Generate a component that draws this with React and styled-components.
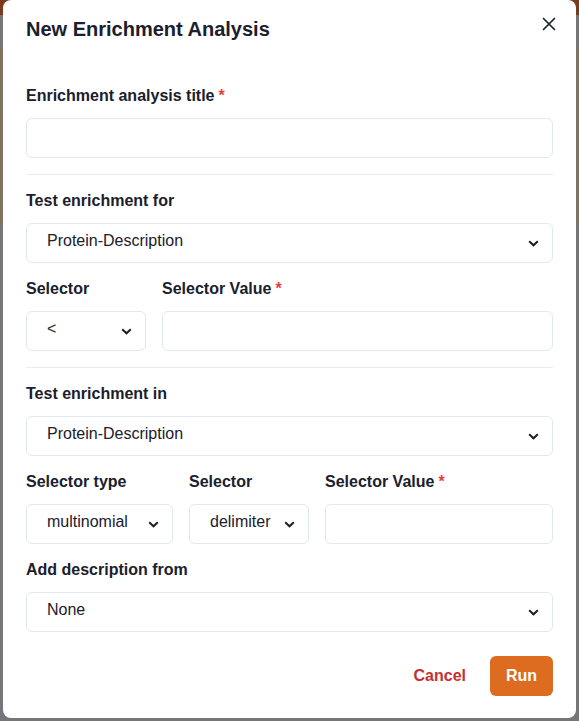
import React from 'react';
import styled, { createGlobalStyle } from 'styled-components';

const GlobalStyle = createGlobalStyle`
  html, body {
    margin: 0;
    padding: 0;
  }
  body {
    font-family: "Liberation Sans", Arial, sans-serif;
    color: #1a202c;
  }
  * {
    box-sizing: border-box;
  }
`;

const Backdrop = styled.div`
  width: 579px;
  height: 721px;
  overflow: hidden;
  display: flex;
  justify-content: flex-start;
  align-items: flex-start;
  padding-left: 3px;
  background: linear-gradient(
    to bottom,
    #7b3a1a 0px,
    #7b3a1a 15px,
    #76767a 15px,
    #76767a 48px,
    #7d7462 48px,
    #7d7462 225px,
    #76767a 225px
  );
`;

const Modal = styled.div`
  width: 573px;
  height: 718px;
  background: #fff;
  border-radius: 8px;
  display: flex;
  flex-direction: column;
  position: relative;
`;

const Header = styled.div`
  padding: 16px 23px 0;
  display: flex;
  align-items: center;
  height: 43px;
`;

const Title = styled.h2`
  margin: 0;
  font-size: 20px;
  font-weight: 700;
  line-height: 27px;
`;

const CloseButton = styled.button`
  position: absolute;
  top: 8px;
  right: 11px;
  width: 32px;
  height: 32px;
  border: none;
  background: transparent;
  display: flex;
  align-items: center;
  justify-content: center;
  padding: 0;
  cursor: pointer;
`;

const Body = styled.div`
  padding: 41px 23px 0;
  display: flex;
  flex-direction: column;
`;

const Field = styled.div`
  display: flex;
  flex-direction: column;
  width: ${(p) => p.width || 'auto'};
  flex: ${(p) => (p.width ? 'none' : '1')};
`;

const Label = styled.label`
  display: block;
  font-size: 16px;
  font-weight: 700;
  line-height: 24px;
  height: 24px;
  margin-bottom: 10px;
`;

const Required = styled.span`
  color: #e53e3e;
  margin-left: 4px;
`;

const Input = styled.input`
  display: block;
  width: 100%;
  height: 40px;
  margin: 0;
  border: 1px solid #e2e8f0;
  border-radius: 6px;
  padding: 0 16px;
  font-family: inherit;
  font-size: 16px;
  outline: none;
`;

const SelectWrap = styled.div`
  position: relative;
  width: 100%;
  height: 40px;
`;

const Select = styled.select`
  display: block;
  width: 100%;
  height: 40px;
  margin: 0;
  appearance: none;
  -webkit-appearance: none;
  border: 1px solid #e2e8f0;
  border-radius: 6px;
  background: #fff;
  padding: 0 32px 5px 20px;
  font-family: inherit;
  font-size: 16px;
  color: #1a202c;
  outline: none;
`;

const Chevron = styled.svg`
  position: absolute;
  right: 14px;
  top: 50%;
  margin-top: -3px;
  pointer-events: none;
`;

const Row = styled.div`
  display: flex;
  gap: 16px;
`;

const Divider = styled.div`
  height: 1px;
  background: #e9edf2;
  margin: 16px 0 14px;
`;

const Spacer = styled.div`
  height: 14px;
`;

const Footer = styled.div`
  display: flex;
  justify-content: flex-end;
  align-items: center;
  gap: 12px;
  padding: 24px 23px 0;
`;

const TextButton = styled.button`
  border: none;
  background: transparent;
  color: #c53030;
  font-family: inherit;
  font-size: 16px;
  font-weight: 700;
  height: 40px;
  padding: 0 12px;
  cursor: pointer;
`;

const PrimaryButton = styled.button`
  border: none;
  background: #dd6b20;
  color: #fff;
  font-family: inherit;
  font-size: 16px;
  font-weight: 700;
  height: 40px;
  width: 63px;
  border-radius: 6px;
  cursor: pointer;
`;

const SelectBox = ({ value }) => (
  <SelectWrap>
    <Select defaultValue={value}>
      <option value={value}>{value}</option>
    </Select>
    <Chevron width="11" height="7" viewBox="0 0 11 7">
      <polyline points="1.2,1.2 5.5,5.3 9.8,1.2" fill="none" stroke="#1a202c" strokeWidth="2" />
    </Chevron>
  </SelectWrap>
);

const App = () => (
  <>
    <GlobalStyle />
    <Backdrop>
      <Modal>
        <Header>
          <Title>New Enrichment Analysis</Title>
        </Header>
        <CloseButton aria-label="Close">
          <svg width="14" height="14" viewBox="0 0 14 14">
            <path d="M1.5 1.5 L12.5 12.5 M12.5 1.5 L1.5 12.5" stroke="#1a202c" strokeWidth="1.7" strokeLinecap="round" />
          </svg>
        </CloseButton>
        <Body>
          <Field>
            <Label>
              Enrichment analysis title<Required>*</Required>
            </Label>
            <Input />
          </Field>
          <Divider />
          <Field>
            <Label>Test enrichment for</Label>
            <SelectBox value="Protein-Description" />
          </Field>
          <Spacer />
          <Row>
            <Field width="120px">
              <Label>Selector</Label>
              <SelectBox value="<" />
            </Field>
            <Field>
              <Label>
                Selector Value<Required>*</Required>
              </Label>
              <Input />
            </Field>
          </Row>
          <Divider />
          <Field>
            <Label>Test enrichment in</Label>
            <SelectBox value="Protein-Description" />
          </Field>
          <Spacer />
          <Row>
            <Field width="147px">
              <Label>Selector type</Label>
              <SelectBox value="multinomial" />
            </Field>
            <Field width="120px">
              <Label>Selector</Label>
              <SelectBox value="delimiter" />
            </Field>
            <Field>
              <Label>
                Selector Value<Required>*</Required>
              </Label>
              <Input />
            </Field>
          </Row>
          <Spacer />
          <Field>
            <Label>Add description from</Label>
            <SelectBox value="None" />
          </Field>
        </Body>
        <Footer>
          <TextButton>Cancel</TextButton>
          <PrimaryButton>Run</PrimaryButton>
        </Footer>
      </Modal>
    </Backdrop>
  </>
);

export default App;
